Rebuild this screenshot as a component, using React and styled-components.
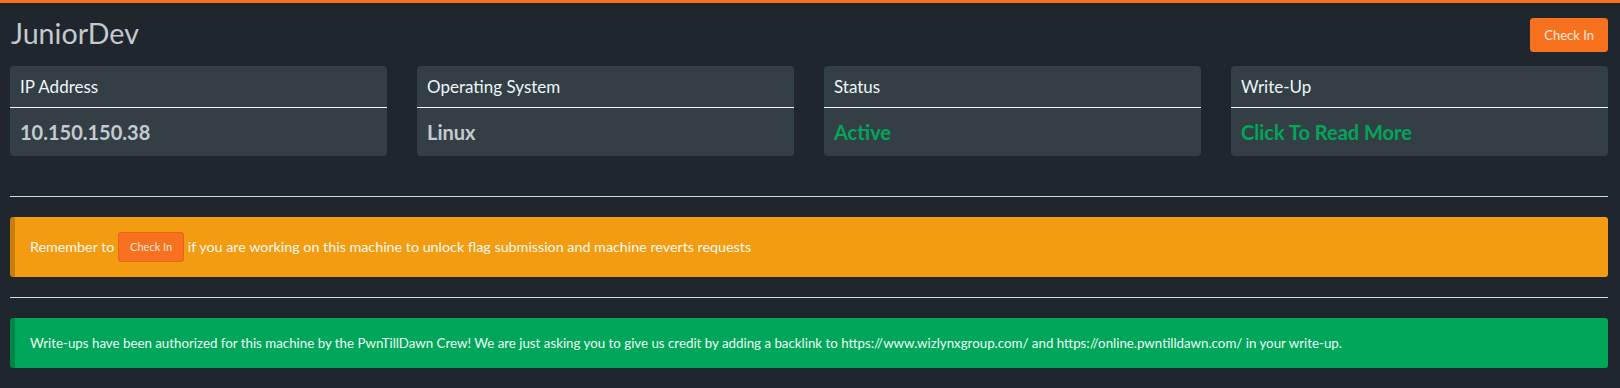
import React from "react";
import styled, { createGlobalStyle } from "styled-components";

const GlobalStyle = createGlobalStyle`
  html, body {
    margin: 0;
    padding: 0;
    background: #20262d;
  }
  body {
    font-family: Lato, "Open Sans", sans-serif;
    color: #eef4f8;
  }
  * { box-sizing: border-box; }
`;

const Page = styled.div`
  border-top: 3px solid #f7711f;
  padding: 0 12px 20px 10px;
  min-height: 388px;
`;

const Header = styled.header`
  display: flex;
  justify-content: space-between;
  align-items: flex-start;
  padding-top: 15px;
`;

const Title = styled.h1`
  margin: -1px 0 0 1px;
  font-size: 28.6px;
  line-height: 33px;
  font-weight: 400;
  color: #c3c9ce;
`;

const Button = styled.button`
  display: inline-block;
  height: ${(p) => (p.$small ? "30px" : "34px")};
  padding: 0 ${(p) => (p.$small ? "11px" : "13px")};
  font-family: Lato, "Open Sans", sans-serif;
  font-size: ${(p) => (p.$small ? "11px" : "13px")};
  line-height: ${(p) => (p.$small ? "28px" : "32px")};
  color: #fde9dc;
  background: #f7711f;
  border: 1px solid ${(p) => (p.$small ? "#e8641a" : "#f7711f")};
  border-radius: 3px;
  vertical-align: top;
  cursor: pointer;
`;

const CardGrid = styled.div`
  display: grid;
  grid-template-columns: repeat(4, 1fr);
  gap: 30px;
  margin-top: 14px;
`;

const Card = styled.div`
  background: #343f45;
  border-radius: 4px;
  overflow: hidden;
`;

const CardHeader = styled.div`
  height: 42px;
  display: flex;
  align-items: center;
  padding: 0 10px 1px 10px;
  border-bottom: 1px solid #f4f7f9;
  font-size: 17px;
  color: #eef5fa;
`;

const CardBody = styled.div`
  height: 48px;
  display: flex;
  align-items: center;
  padding: 0 10px;
  font-size: 20px;
  font-weight: 700;
  color: ${(p) => (p.$green ? "#00a65a" : "#c3cad0")};
`;

const Divider = styled.hr`
  border: 0;
  border-top: 1px solid #d9dbdd;
  margin: ${(p) => p.$top}px 0 20px 0;
  height: 0;
`;

const Callout = styled.div`
  border-radius: 3px;
  border-left: 5px solid ${(p) => (p.$variant === "warning" ? "#c87f0a" : "#008748")};
  background: ${(p) => (p.$variant === "warning" ? "#f39c12" : "#00a65a")};
  padding: 15px 30px 15px 15px;
  font-size: ${(p) => (p.$variant === "warning" ? "14.3px" : "13.3px")};
  line-height: ${(p) => (p.$variant === "warning" ? "30px" : "20px")};
  color: ${(p) => (p.$variant === "warning" ? "#fffaf0" : "#eefaf2")};
  white-space: nowrap;
`;

const cards = [
  { label: "IP Address", value: "10.150.150.38" },
  { label: "Operating System", value: "Linux" },
  { label: "Status", value: "Active", green: true },
  { label: "Write-Up", value: "Click To Read More", green: true },
];

export default function App() {
  return (
    <>
      <GlobalStyle />
      <Page>
        <Header>
          <Title>JuniorDev</Title>
          <Button>Check In</Button>
        </Header>
        <CardGrid>
          {cards.map((c) => (
            <Card key={c.label}>
              <CardHeader>{c.label}</CardHeader>
              <CardBody $green={c.green}>{c.value}</CardBody>
            </Card>
          ))}
        </CardGrid>
        <Divider $top={40} />
        <Callout $variant="warning">
          Remember to <Button $small>Check In</Button> if you are working on this
          machine to unlock flag submission and machine reverts requests
        </Callout>
        <Divider $top={20} />
        <Callout $variant="success">
          Write-ups have been authorized for this machine by the PwnTillDawn Crew!
          We are just asking you to give us credit by adding a backlink to
          https://www.wizlynxgroup.com/ and https://online.pwntilldawn.com/ in
          your write-up.
        </Callout>
      </Page>
    </>
  );
}
